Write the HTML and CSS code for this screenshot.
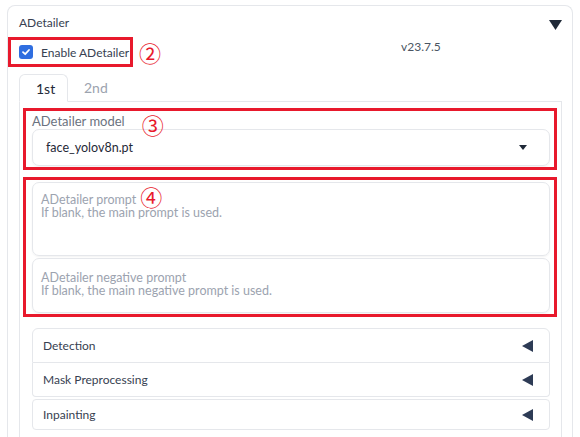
FILE: index.html
```html
<!DOCTYPE html>
<html>
<head>
  <title>ADetailer</title>
<link rel="stylesheet" href="styles.css">
</head>
<body>
  <div class="panel">
    <div class="panel-head">
      <span class="panel-title">ADetailer</span>
      <svg class="toggle" width="13" height="10" viewBox="0 0 13 10"><polygon points="0,0 13,0 6.5,10" fill="#1f2937"/></svg>
    </div>

    <div class="enable-row">
      <label class="enable mark">
        <span class="check">
          <svg width="10" height="10" viewBox="0 0 10 10"><polyline points="2,5.2 4.2,7.2 8,3" fill="none" stroke="#fff" stroke-width="1.8" stroke-linecap="round" stroke-linejoin="round"/></svg>
        </span>
        Enable ADetailer
      </label>
      <span class="num num-2">②</span>
      <span class="version">v23.7.5</span>
    </div>

    <div class="tabs">
      <div class="tab-nav">
        <div class="tab active">1st</div>
        <div class="tab">2nd</div>
        <div class="tab-line"></div>
      </div>
      <div class="tab-body">
        <div class="model mark">
          <div class="field-label">ADetailer model <span class="num num-3">③</span></div>
          <div class="dropdown">
            <span>face_yolov8n.pt</span>
            <svg width="8" height="5" viewBox="0 0 8 5"><polygon points="0,0 8,0 4,5" fill="#1f2937"/></svg>
          </div>
        </div>

        <div class="prompts mark">
          <div class="prompt prompt-main">
            <div class="ph">ADetailer prompt <span class="num num-4">④</span></div>
            <div class="ph">If blank, the main prompt is used.</div>
          </div>
          <div class="prompt prompt-neg">
            <div class="ph">ADetailer negative prompt</div>
            <div class="ph">If blank, the main negative prompt is used.</div>
          </div>
        </div>

        <div class="accordions">
          <div class="acc acc-first">
            <span>Detection</span>
            <svg width="11" height="12" viewBox="0 0 11 12"><polygon points="11,0 11,12 0,6" fill="#2d3b55"/></svg>
          </div>
          <div class="acc acc-mid">
            <span>Mask Preprocessing</span>
            <svg width="11" height="12" viewBox="0 0 11 12"><polygon points="11,0 11,12 0,6" fill="#2d3b55"/></svg>
          </div>
          <div class="acc acc-last">
            <span>Inpainting</span>
            <svg width="11" height="12" viewBox="0 0 11 12"><polygon points="11,0 11,12 0,6" fill="#2d3b55"/></svg>
          </div>
        </div>
      </div>
    </div>
  </div>
</body>
</html>
```

FILE: styles.css
```css
* {
  margin: 0;
  padding: 0;
  box-sizing: border-box;
}

html,
body {
  overflow: hidden;
}

body {
  font-family: Lato, "Open Sans", sans-serif;
  background-color: #ffffff;
  color: #374151;
  font-size: 13px;
  height: 437px;
}

.panel {
  margin: 5px 7px 0 7px;
  border: 1px solid #e5e7eb;
  border-bottom: none;
  border-radius: 8px 8px 0 0;
  height: 432px;
}

.panel-head {
  display: flex;
  justify-content: space-between;
  align-items: flex-start;
  padding: 9px 10px 0 11px;
  height: 34px;
}

.panel-title {
  font-size: 12px;
  line-height: 16px;
}

.toggle {
  margin-top: 5px;
}

.mark {
  outline: 3px solid #e8192c;
}

.enable-row {
  display: flex;
  align-items: center;
  height: 24px;
  padding-left: 3px;
}

.enable {
  display: flex;
  align-items: center;
  width: 119px;
  height: 24px;
  padding-left: 8px;
  font-size: 12px;
  white-space: nowrap;
  color: #374151;
}

.check {
  width: 14px;
  height: 14px;
  border-radius: 3px;
  background-color: #2f6ee0;
  display: flex;
  align-items: center;
  justify-content: center;
  margin-right: 8px;
  flex-shrink: 0;
}

.num {
  color: #e8192c;
  font-family: "Noto Sans CJK JP", "DejaVu Sans", sans-serif;
  font-size: 22px;
  line-height: 18px;
}

.num-2 {
  margin-left: 9px;
}

.version {
  margin-left: 240px;
  font-size: 12px;
  color: #4b5563;
  margin-top: -12px;
}

.tabs {
  margin: 10px 10px 0 11px;
}

.tab-nav {
  display: flex;
  height: 28px;
}

.tab {
  font-size: 14px;
  line-height: 27px;
  padding: 0 16px;
  color: #9ca3af;
  border-bottom: 1px solid #e5e7eb;
}

.tab.active {
  color: #1f2937;
  border: 1px solid #e5e7eb;
  border-bottom-color: #ffffff;
  border-radius: 6px 6px 0 0;
  width: 49px;
}

.tab-line {
  flex: 1;
  border-bottom: 1px solid #e5e7eb;
}

.tab-body {
  border-left: 1px solid #e5e7eb;
  border-right: 1px solid #e5e7eb;
  height: 400px;
  padding: 9px 7px 0 6px;
}

.model {
  padding: 2px 4px 1px 6px;
}

.field-label {
  color: #6b7280;
  font-size: 13px;
  line-height: 16px;
  display: flex;
  align-items: center;
  height: 16px;
}

.num-3 {
  margin-left: 17px;
  margin-top: 6px;
}

.dropdown {
  display: flex;
  justify-content: space-between;
  align-items: center;
  height: 37px;
  border: 1px solid #e5e7eb;
  border-radius: 7px;
  box-shadow: 0 1px 2px rgba(0, 0, 0, 0.05);
  padding: 0 22px 0 13px;
  font-size: 12.5px;
  color: #1f2937;
}

.prompts {
  margin-top: 13px;
  padding: 2px 4px 1px 6px;
  display: flex;
  flex-direction: column;
  gap: 2px;
}

.prompt {
  border: 1px solid #e5e7eb;
  border-radius: 7px;
  box-shadow: 0 1px 2px rgba(0, 0, 0, 0.05);
  padding: 10px 8px;
}

.prompt-main {
  height: 74px;
}

.prompt-neg {
  height: 55px;
  padding-top: 12px;
}

.ph {
  color: #9ca3af;
  font-size: 12.5px;
  line-height: 13px;
  height: 13px;
  display: flex;
  align-items: center;
}

.num-4 {
  margin-left: 4px;
  margin-top: -8px;
}

.accordions {
  margin: 14px 4px 0 6px;
}

.acc {
  display: flex;
  justify-content: space-between;
  align-items: center;
  border: 1px solid #e5e7eb;
  padding: 0 16px 0 10px;
  font-size: 12px;
  color: #374151;
}

.acc-first {
  height: 35px;
  border-radius: 6px 6px 0 0;
}

.acc-mid {
  height: 34px;
  border-top: none;
  border-radius: 0 0 4px 4px;
}

.acc-last {
  height: 31px;
  margin-top: 2px;
  border-radius: 4px;
}
```
